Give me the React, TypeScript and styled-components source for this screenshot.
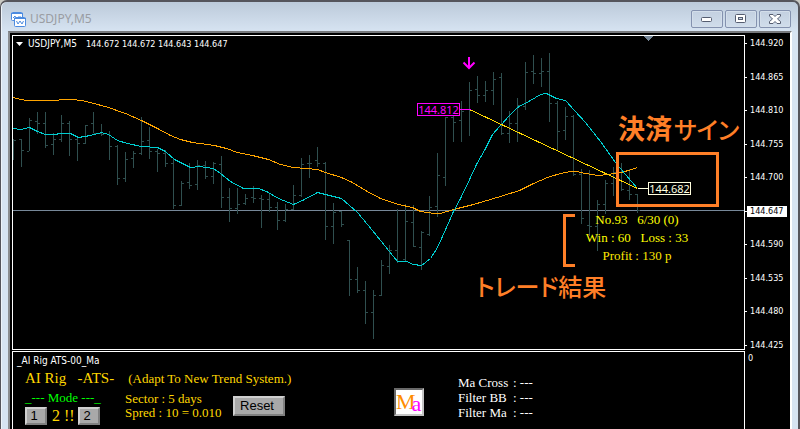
import React from "react";
import styled, { createGlobalStyle } from "styled-components";

const UI = `"DejaVu Sans Condensed", "DejaVu Sans", sans-serif`;
const SERIF = `"Liberation Serif", "Times New Roman", serif`;
const JP = `"Noto Sans CJK JP", sans-serif`;

const GlobalStyle = createGlobalStyle`
  * { box-sizing: border-box; }
  html, body { margin: 0; background: #c9c9c4; }
  button { margin: 0; padding: 0; cursor: pointer; }
`;

const Frame = styled.main`
  display: flex;
  flex-direction: column;
  min-height: 100vh;
  padding: 0 6px 0 7px;
  border: solid #55555c;
  border-width: 2px 2px 0 1px;
  border-radius: 7px 7px 0 0;
  background: linear-gradient(#bccada, #d7e4f2 30px);
  box-shadow: inset 1px 0 #eef4fa;
`;

const TitleBar = styled.header`
  display: flex;
  align-items: center;
  height: 29px;
  padding: 5px 0 0 3px;
`;

const Title = styled.h1`
  flex: 1;
  margin: 0 0 0 4px;
  font: 400 12px/16px "Noto Sans", sans-serif;
  color: #9a9da3;
`;

const WindowButtons = styled.div`
  display: flex;
  align-self: flex-start;
  gap: 2px;
  padding: 3px 1px 0 0;
`;

const WindowButton = styled.button`
  display: grid;
  place-items: center;
  width: 32px;
  height: 18px;
  border: 1px solid #8492af;
  border-radius: 2px;
  background: linear-gradient(#c3d0e0, #d0ddeb);
  box-shadow: inset 0 0 0 1px #d3deea;
`;

const Client = styled.div`
  flex: 1;
  display: grid;
  grid-template-columns: minmax(0, 1fr) 45px;
  grid-template-rows: 316px 1fr;
  padding: 2px 0 0 2px;
  border: solid;
  border-width: 2px 2px 0;
  border-color: #77797d #ffffff #ffffff #8b8d90;
  background: #000;
`;

const Plot = styled.section`
  position: relative;
  height: 315px;
  border: 1px solid #fff;
  overflow: hidden;
`;

const PlotHeader = styled.div`
  position: absolute;
  left: 3px;
  top: 1px;
  display: flex;
  align-items: center;
  gap: 5px;
  font: 9px/14px ${UI};
  color: #fff;
`;

const Symbol = styled.span`
  margin-right: 4px;
  font-size: 10px;
`;

const Caret = styled.button`
  width: 7px;
  height: 4px;
  border: 0;
  background: #fff;
  clip-path: polygon(0 0, 100% 0, 50% 100%);
`;

const Drawing = styled.svg`
  display: block;
  width: 100%;
  height: 313px;
`;

const Axis = styled.ol`
  display: flex;
  flex-direction: column;
  justify-content: space-between;
  margin: 0;
  padding: 3px 0 0;
  list-style: none;
`;

const AxisLabel = styled.li<{ $current?: boolean }>`
  display: flex;
  align-items: center;
  font: 9px/11px ${UI};
  color: ${(p) => (p.$current ? "#000" : "#fff")};

  &::before {
    content: "";
    width: 2px;
    height: 1px;
    background: #fff;
  }
`;

const AxisValue = styled.span<{ $current?: boolean }>`
  width: ${(p) => (p.$current ? "40px" : "auto")};
  padding-left: 3px;
  background: ${(p) => (p.$current ? "#fff" : "transparent")};
`;

const PriceTag = styled.output<{ $color: string; $x: number; $y: number }>`
  position: absolute;
  left: ${(p) => p.$x}px;
  top: ${(p) => p.$y}px;
  width: 43px;
  height: 13px;
  border: 1px solid ${(p) => p.$color};
  background: #000;
  color: ${(p) => p.$color};
  font: 11px/11px "Noto Sans", sans-serif;
  text-align: center;
`;

const Highlight = styled.div`
  position: absolute;
  left: 603px;
  top: 116px;
  width: 103px;
  height: 55px;
  border: 3px solid #ff7f27;
`;

const Bracket = styled.div`
  position: absolute;
  left: 550px;
  top: 178px;
  width: 12px;
  height: 53px;
  border: 3px solid #ff7f27;
  border-right: 0;
`;

const Callout = styled.p<{ $x: number; $y: number; $size: number }>`
  position: absolute;
  left: ${(p) => p.$x}px;
  top: ${(p) => p.$y}px;
  margin: 0;
  font: 500 ${(p) => p.$size}px/32px ${JP};
  font-feature-settings: "palt";
  color: #ff7f27;
  white-space: nowrap;
`;

const Kanji = styled.strong`
  margin-right: 2px;
  font-weight: 700;
  font-feature-settings: normal;
`;

const Kana = styled.span`
  font-size: 24px;
`;

const Result = styled.div`
  position: absolute;
  left: 564px;
  top: 175px;
  width: 120px;
  font: 13px/18px ${SERIF};
  color: #ffff00;
  text-align: center;
  white-space: pre;
`;

const ResultLine = styled.div<{ $gold?: boolean }>`
  color: ${(p) => (p.$gold ? "#ffe600" : "#ffff00")};
`;

const Indicator = styled.section`
  border: solid #fff;
  border-width: 1px 1px 0;
  padding: 2px 0 0 4px;
  color: #ffd700;
  font: 13px/15px ${SERIF};
`;

const IndicatorName = styled.h2`
  margin: 0;
  font: 10px/14px ${UI};
  color: #fff;
`;

const IndicatorBody = styled.div`
  display: flex;
  padding-left: 8px;
`;

const Settings = styled.div`
  width: 369px;
`;

const Heading = styled.div`
  display: flex;
  align-items: baseline;
  gap: 14px;
  line-height: 20px;
  white-space: pre;
`;

const Product = styled.strong`
  font-size: 15px;
  font-weight: 400;
`;

const Controls = styled.div`
  display: flex;
`;

const Mode = styled.fieldset`
  width: 100px;
  margin: 0;
  padding: 0;
  border: 0;
`;

const ModeTitle = styled.legend`
  height: 18px;
  padding: 0;
  line-height: 18px;
  color: #00ff00;
`;

const ModeRow = styled.div`
  display: flex;
  align-items: center;
  gap: 5px;
`;

const ModeValue = styled.span`
  width: 21px;
  font-size: 16px;
  line-height: 18px;
  white-space: nowrap;
`;

const PanelButton = styled.button<{ $wide?: boolean }>`
  width: ${(p) => (p.$wide ? "52px" : "22px")};
  height: ${(p) => (p.$wide ? "20px" : "18px")};
  margin-top: ${(p) => (p.$wide ? "7px" : "0")};
  padding: 0 4px 0 0;
  border: 2px solid;
  border-color: #d0d0d0 #808080 #808080 #d0d0d0;
  background: #a9a9a9;
  color: #000;
  font: 13px/14px "Liberation Sans", sans-serif;
`;

const Info = styled.div`
  width: 108px;
  padding-top: 3px;
  line-height: 14px;
  white-space: nowrap;
`;

const Badge = styled.div`
  display: flex;
  width: 30px;
  height: 28px;
  margin-top: 20px;
  border: 2px solid;
  border-color: #696969 #c4c4c4 #c4c4c4 #696969;
  background: #fff;
  font-size: 22px;
  line-height: 24px;
  color: #ff8c00;
`;

const BadgeLetter = styled.span`
  margin-left: -4px;
  color: #ff00ff;
  line-height: 28px;
`;

const Filters = styled.dl`
  display: grid;
  grid-template-columns: 55px auto;
  align-content: start;
  margin: 7px 0 0 34px;
  color: #fff;
  white-space: nowrap;
`;

const Term = styled.dt``;
const Detail = styled.dd`
  margin: 0;
`;

const SubAxis = styled.div`
  padding: 1px 0 0 3px;
  font: 9px/12px ${UI};
  color: #fff;
`;

/* high, low, open, close (screen rows) for each bar, one bar every 8 columns */
const BARS = [
  [139, 160, 140, 140], [139, 167, 139, 150], [118, 151, 151, 120], [112, 134, 121, 123],
  [112, 148, 123, 145], [133, 155, 144, 139], [115, 142, 139, 123], [121, 156, 123, 139],
  [137, 161, 139, 143], [125, 144, 143, 125], [112, 133, 123, 133], [124, 136, 133, 134],
  [131, 160, 134, 146], [145, 185, 146, 178], [152, 182, 178, 159], [151, 168, 158, 153],
  [117, 155, 153, 141], [127, 159, 140, 151], [149, 172, 151, 153], [150, 167, 153, 163],
  [159, 209, 163, 205], [181, 206, 205, 183], [163, 189, 182, 185], [160, 190, 184, 165],
  [161, 179, 165, 176], [162, 184, 176, 163], [156, 208, 164, 197], [188, 222, 197, 208],
  [188, 214, 208, 204], [194, 205, 203, 198], [186, 203, 197, 198], [195, 228, 198, 199],
  [194, 212, 199, 207], [202, 230, 207, 220], [204, 222, 220, 209], [185, 210, 209, 195],
  [158, 197, 195, 164], [155, 178, 163, 163], [147, 167, 160, 163], [162, 240, 163, 226],
  [203, 244, 226, 212], [211, 227, 211, 224], [240, 296, 240, 279], [267, 293, 279, 290],
  [281, 324, 290, 312], [290, 339, 312, 295], [260, 296, 295, 265], [245, 274, 266, 250],
  [209, 263, 250, 261], [204, 262, 259, 221], [205, 247, 222, 246], [231, 270, 247, 232],
  [196, 236, 234, 207], [153, 217, 206, 175], [117, 186, 177, 117], [113, 142, 117, 122],
  [101, 142, 120, 111], [82, 136, 109, 90], [76, 103, 89, 95], [81, 102, 95, 90],
  [72, 105, 90, 79], [73, 135, 77, 133], [111, 143, 133, 123], [98, 142, 123, 105],
  [62, 110, 106, 72], [55, 84, 71, 73], [58, 87, 73, 71], [53, 122, 71, 103],
  [101, 150, 103, 131], [107, 140, 130, 116], [115, 176, 116, 174], [169, 224, 174, 218],
  [170, 236, 225, 226], [200, 251, 226, 204], [180, 214, 204, 183], [167, 196, 183, 172],
  [163, 191, 172, 189], [169, 200, 190, 194], [194, 213, 194, 210],
];

const barPath = BARS.map(([high, low, open, close], i) => {
  const x = 13 + i * 8;
  return `M${x + 0.5} ${high}V${low}M${x - 2} ${open + 0.5}h2M${x + 1} ${close + 0.5}h2`;
}).join("");

const SLOW =
  "13,97 20,99 27,100 57,100 60,99 72,99 81,100 90,102 108,107 125,113 141,120 157,128 170,135 180,139 192,142 214,145 226,148 237,152 252,155 268,159 280,164 293,167 305,168 317,169 325,172 341,177 352,182 365,190 380,198 398,204 412,207 420,211 434,213 440,213 453,209 473,204 490,199 503,195 519,190 533,183 547,177 560,173 570,171 576,171 585,173 598,175 608,174 620,172 628,170 637,167";
const FAST =
  "13,128 20,129 29,127 37,131 45,134 55,134 59,133 70,133 78,137 90,135 101,132 108,134 117,140 127,143 141,146 157,147 165,151 174,159 190,167 199,166 213,168 220,173 230,181 243,188 258,188 266,191 278,198 293,204 302,200 317,192 341,198 357,212 372,230 397,261 406,261 413,264 421,265 430,258 437,247 446,227 453,211 460,198 470,177 476,164 485,148 492,134 500,125 509,115 517,107 530,100 540,94 546,93 556,98 565,100 574,110 585,122 600,141 615,162 625,174 637,188";

const PRICES = ["144.920", "144.865", "144.810", "144.755", "144.700", "144.647", "144.590", "144.535", "144.480", "144.425"];
const CURRENT = "144.647";

const ChartIcon = () => (
  <svg width="15" height="15" viewBox="0 0 15 15" fill="#fff" stroke="#4c8be0" aria-hidden="true">
    <rect x="0.5" y="0.5" width="11" height="8" rx="1" />
    <path d="M0 1.500h12" />
    <path d="M2 6l2-2 1 2M7 5h3" fill="none" />
    <rect x="3.5" y="5.5" width="11" height="9" rx="1" />
    <path d="M3 6.500h12" />
    <path d="M5.500 9l1.500 3 2-3 2 3 1.500-3" fill="none" />
  </svg>
);

const Chart = () => (
  <Drawing shapeRendering="crispEdges" fill="none" role="img" aria-label="USDJPY M5 bar chart">
    <line x1="0" x2="100%" y1="174.5" y2="174.5" stroke="#778899" />
    <g transform="translate(-13 -36)">
      <path d={barPath} stroke="#2f4f4f" />
      <g transform="translate(0.5 0.5)">
        <polyline points={SLOW} stroke="#ffa500" />
        <polyline points={FAST} stroke="#00ced1" />
        <path d="M469 109L637 188" stroke="#ffd700" />
        <path d="M459 109h11" stroke="#ff00ff" />
        <path d="M637 188h11" stroke="#ffffe0" />
      </g>
      <path d="M643 36h10l-5 5z" fill="#778899" />
      <path d="M469 57v11M463.500 62.500l5.500 5.500 5.500-5.500" stroke="#ff00ff" strokeWidth="2" shapeRendering="auto" />
    </g>
  </Drawing>
);

export default function App() {
  return (
    <>
      <GlobalStyle />
      <Frame>
        <TitleBar>
          <ChartIcon />
          <Title>USDJPY,M5</Title>
          <WindowButtons>
            <WindowButton aria-label="Minimize">
              <svg width="12" height="6" viewBox="0 0 12 6">
                <rect x="0.5" y="1.500" width="10" height="4" rx="1" fill="#fff" stroke="#555d70" />
              </svg>
            </WindowButton>
            <WindowButton aria-label="Maximize">
              <svg width="12" height="10" viewBox="0 0 12 10" fill="#fff" stroke="#555d70">
                <rect x="0.5" y="0.5" width="10" height="8" rx="1" />
                <rect x="3.500" y="3.500" width="4" height="2" fill="#c8d5e4" />
              </svg>
            </WindowButton>
            <WindowButton aria-label="Close">
              <svg width="12" height="10" viewBox="0 0 12 10">
                <path d="M.5.500h3.500L6 2.500 8 .500h3.500v1.500L8.500 5l3 2.500v2H8L6 7.500 4 9.500H.5v-2L3.500 5l-3-3z" fill="#fff" stroke="#555d70" />
              </svg>
            </WindowButton>
          </WindowButtons>
        </TitleBar>

        <Client>
          <Plot>
            <Chart />
            <PlotHeader>
              <Caret aria-label="Chart menu" />
              <Symbol>USDJPY,M5</Symbol>
              <span>144.672 144.672 144.643 144.647</span>
            </PlotHeader>
            <PriceTag $color="#ff00ff" $x={404} $y={67}>144.812</PriceTag>
            <PriceTag $color="#ffffe0" $x={635} $y={146}>144.682</PriceTag>
            <Highlight />
            <Bracket />
            <Callout $x={605} $y={76} $size={27}>
              <Kanji>決済</Kanji>
              <Kana>サイン</Kana>
            </Callout>
            <Callout $x={463} $y={234} $size={24}>トレード結果</Callout>
            <Result>
              <ResultLine>No.93   6/30 (0)</ResultLine>
              <ResultLine>Win : 60   Loss : 33</ResultLine>
              <ResultLine $gold>Profit : 130 p</ResultLine>
            </Result>
          </Plot>
          <Axis>
            {PRICES.map((price) => (
              <AxisLabel key={price} $current={price === CURRENT}>
                <AxisValue $current={price === CURRENT}>{price}</AxisValue>
              </AxisLabel>
            ))}
          </Axis>

          <Indicator>
            <IndicatorName>_AI Rig ATS-00_Ma</IndicatorName>
            <IndicatorBody>
              <Settings>
                <Heading>
                  <Product>AI Rig   -ATS-</Product>
                  <span>(Adapt To New Trend System.)</span>
                </Heading>
                <Controls>
                  <Mode>
                    <ModeTitle>_--- Mode ---_</ModeTitle>
                    <ModeRow>
                      <PanelButton>1</PanelButton>
                      <ModeValue>2 !!</ModeValue>
                      <PanelButton>2</PanelButton>
                    </ModeRow>
                  </Mode>
                  <Info>
                    <div>Sector : 5 days</div>
                    <div>Spred : 10 = 0.010</div>
                  </Info>
                  <PanelButton $wide>Reset</PanelButton>
                </Controls>
              </Settings>
              <Badge>
                M<BadgeLetter>a</BadgeLetter>
              </Badge>
              <Filters>
                <Term>Ma Cross</Term>
                <Detail>: ---</Detail>
                <Term>Filter BB</Term>
                <Detail>: ---</Detail>
                <Term>Filter Ma</Term>
                <Detail>: ---</Detail>
              </Filters>
            </IndicatorBody>
          </Indicator>
          <SubAxis>0</SubAxis>
        </Client>
      </Frame>
    </>
  );
}
